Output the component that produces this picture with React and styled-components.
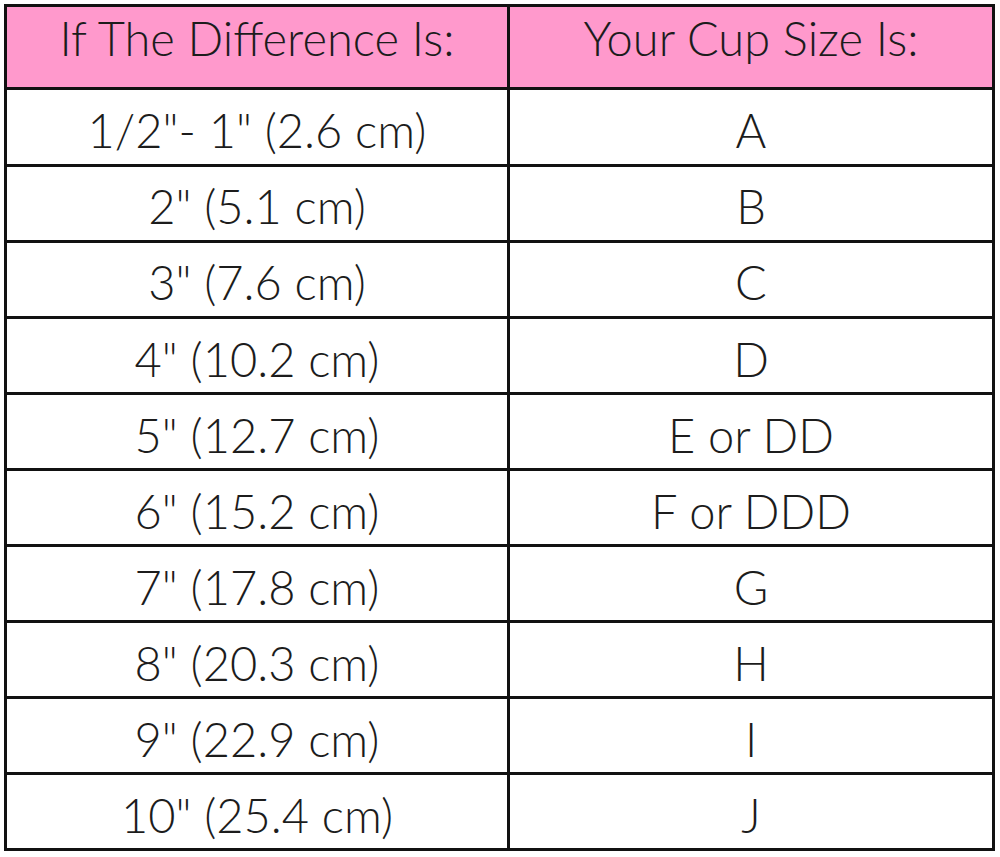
import React from "react";
import styled, { createGlobalStyle } from "styled-components";

const GlobalStyle = createGlobalStyle`
  html, body { margin: 0; padding: 0; background: #ffffff; }
  body { font-family: "Lato", "Noto Sans", sans-serif; }
`;

const Page = styled.div`
  padding: 4px 0 0 4px;
`;

const Grid = styled.div`
  display: grid;
  grid-template-columns: 500px 482px;
  grid-template-rows: 80px 73.5px repeat(9, 73.1px);
  gap: 3px;
  padding: 3px;
  width: max-content;
  background: #111111;
`;

const HeaderCell = styled.div`
  background: #ff99cc;
  display: flex;
  align-items: center;
  justify-content: center;
  padding-bottom: 18px;
  box-sizing: border-box;
  font-family: "Lato", sans-serif;
  font-weight: 300;
  font-size: 47px;
  line-height: 1.2;
  color: #1c1c1c;
  white-space: nowrap;
`;

const Cell = styled.div`
  background: #ffffff;
  display: flex;
  align-items: center;
  justify-content: center;
  padding-top: 7px;
  box-sizing: border-box;
  font-family: "Lato", sans-serif;
  font-weight: 300;
  font-size: 47px;
  line-height: 1.2;
  color: #1c1c1c;
  white-space: nowrap;
`;

const rows = [
  ['1/2"- 1" (2.6 cm)', "A"],
  ['2" (5.1 cm)', "B"],
  ['3" (7.6 cm)', "C"],
  ['4" (10.2 cm)', "D"],
  ['5" (12.7 cm)', "E or DD"],
  ['6" (15.2 cm)', "F or DDD"],
  ['7" (17.8 cm)', "G"],
  ['8" (20.3 cm)', "H"],
  ['9" (22.9 cm)', "I"],
  ['10" (25.4 cm)', "J"],
];

export default function App() {
  return (
    <>
      <GlobalStyle />
      <Page>
        <Grid>
          <HeaderCell>If The Difference Is:</HeaderCell>
          <HeaderCell>Your Cup Size Is:</HeaderCell>
          {rows.map(([diff, cup]) => (
            <React.Fragment key={cup}>
              <Cell>{diff}</Cell>
              <Cell>{cup}</Cell>
            </React.Fragment>
          ))}
        </Grid>
      </Page>
    </>
  );
}
